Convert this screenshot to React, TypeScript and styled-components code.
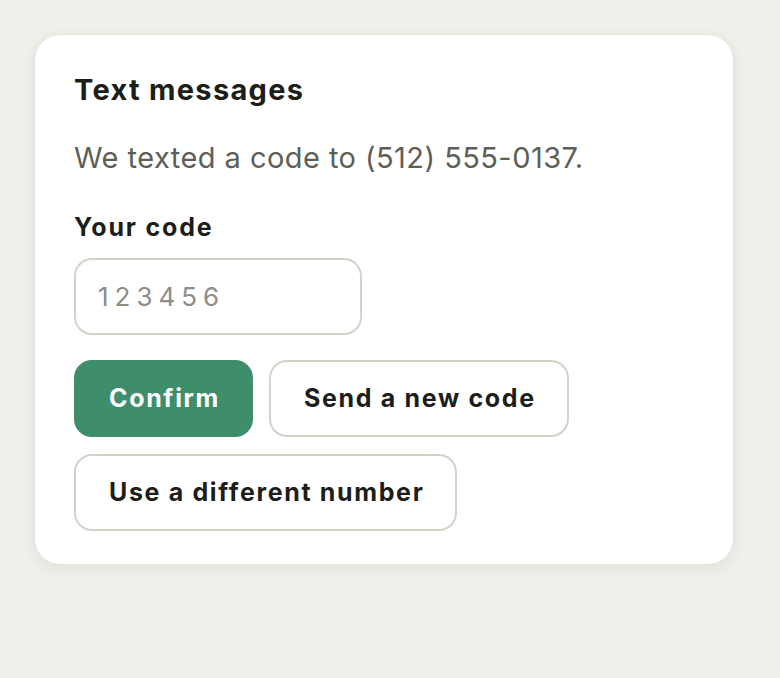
import React from "react";
import styled, { createGlobalStyle } from "styled-components";

const GlobalStyle = createGlobalStyle`
  html, body {
    margin: 0;
    padding: 0;
    background: #f0f0eb;
  }
  body {
    font-family: Inter, "Noto Sans", sans-serif;
    -webkit-font-smoothing: antialiased;
  }
  * { box-sizing: border-box; }
`;

const Page = styled.div`
  padding: 34px;
`;

const Card = styled.section`
  width: 700px;
  background: #ffffff;
  border: 1px solid #e3e4dd;
  border-radius: 26px;
  box-shadow: 0 4px 14px rgba(60, 60, 40, 0.08);
  padding: 37px 39px 33px;
  display: flex;
  flex-direction: column;
`;

const Title = styled.h2`
  margin: 0;
  font-size: 29px;
  line-height: 36px;
  font-weight: 700;
  color: #1d1d1a;
  letter-spacing: 1.3px;
`;

const Lead = styled.p`
  margin: 30px 0 0;
  font-size: 29px;
  line-height: 40px;
  font-weight: 400;
  color: #5d5f57;
  letter-spacing: 0.45px;
`;

const Label = styled.label`
  margin-top: 33px;
  font-size: 25px;
  line-height: 32px;
  font-weight: 700;
  color: #1d1d1a;
  letter-spacing: 1.8px;
`;

const CodeInput = styled.input`
  margin-top: 15px;
  width: 288px;
  height: 77px;
  border: 2px solid #d3d4c9;
  border-radius: 18px;
  padding: 0 22px;
  font-family: inherit;
  font-size: 26px;
  letter-spacing: 6px;
  color: #1d1d1a;
  background: #fff;
  outline: none;
  &::placeholder {
    color: #8d8e88;
  }
`;

const Actions = styled.div`
  margin-top: 25px;
  display: flex;
  flex-wrap: wrap;
  gap: 17px 16px;
`;

const Button = styled.button<{ $primary?: boolean }>`
  height: 77px;
  padding: 0 31px 2px 33px;
  border-radius: 18px;
  font-family: inherit;
  font-size: 25px;
  font-weight: 700;
  letter-spacing: 1.65px;
  cursor: pointer;
  border: 2px solid ${(p) => (p.$primary ? "#3e8e6b" : "#d3d4c9")};
  background: ${(p) => (p.$primary ? "#3e8e6b" : "#ffffff")};
  color: ${(p) => (p.$primary ? "#ffffff" : "#1d1d1a")};
`;

export default function App() {
  return (
    <>
      <GlobalStyle />
      <Page>
        <Card>
          <Title>Text messages</Title>
          <Lead>We texted a code to (512) 555-0137.</Lead>
          <Label htmlFor="code">Your code</Label>
          <CodeInput id="code" placeholder="123456" inputMode="numeric" />
          <Actions>
            <Button $primary>Confirm</Button>
            <Button>Send a new code</Button>
            <Button>Use a different number</Button>
          </Actions>
        </Card>
      </Page>
    </>
  );
}
